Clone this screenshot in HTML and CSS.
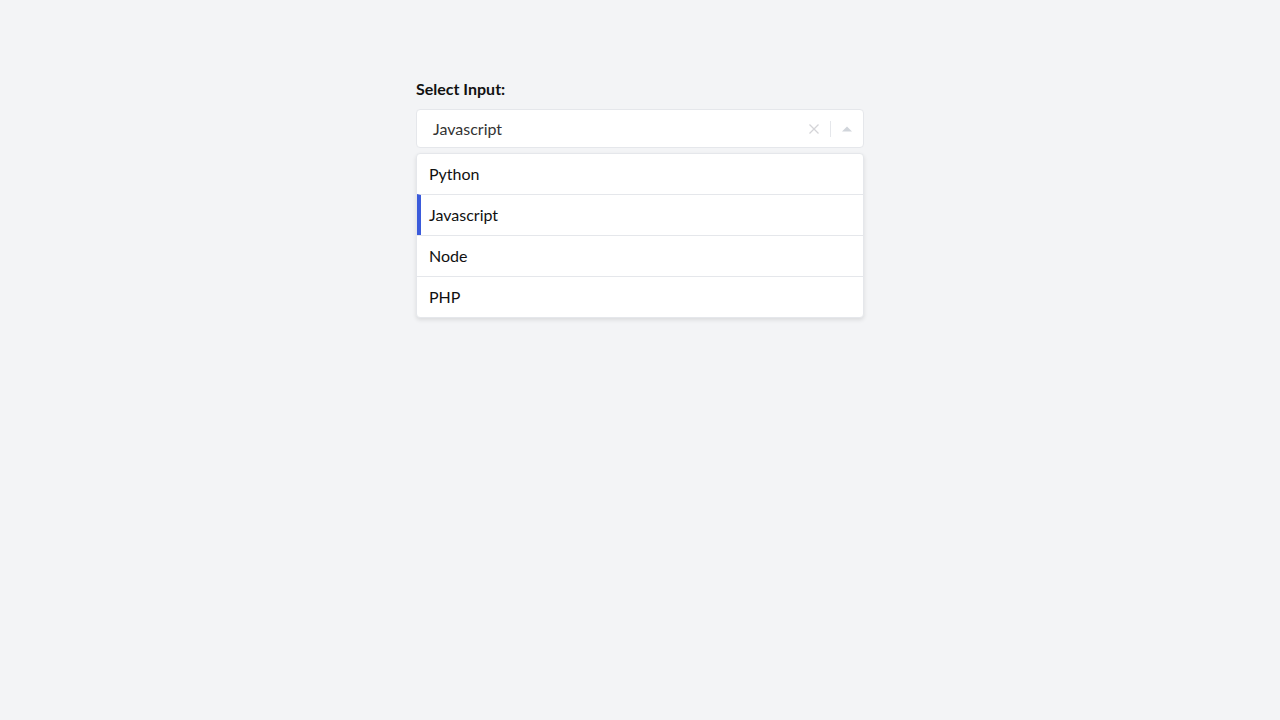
FILE: index.html
```html
<!DOCTYPE html>
<html>
<head>
<meta charset="utf-8">
<link rel="stylesheet" href="styles.css">
</head>
<body>
<div class="wrap">
  <label class="label">Select Input:</label>
  <div class="select">
    <span class="value">Javascript</span>
    <div class="controls">
      <svg class="clear" width="12" height="12" viewBox="0 0 12 12"><path d="M1.5 1.5 L10.5 10.5 M10.5 1.5 L1.5 10.5" stroke="#d4d4d8" stroke-width="1.3" fill="none"/></svg>
      <span class="sep"></span>
      <svg class="caret" width="12" height="8" viewBox="0 0 12 8"><path d="M1 6.5 L6 1.5 L11 6.5 Z" fill="#d1d5db"/></svg>
    </div>
  </div>
  <ul class="menu">
    <li class="opt">Python</li>
    <li class="opt active">Javascript</li>
    <li class="opt">Node</li>
    <li class="opt">PHP</li>
  </ul>
</div>
</body>
</html>
```
FILE: styles.css
```css
html, body { margin: 0; padding: 0; }
body {
  background: #f3f4f6;
  font-family: Lato, "Noto Sans", sans-serif;
  color: #111827;
  height: 720px;
}
.wrap {
  width: 448px;
  margin: 0 auto;
  padding-top: 78px;
}
.label {
  display: block;
  font-weight: 700;
  font-size: 16px;
  line-height: 22px;
  margin-bottom: 9px;
  color: #111;
}
.select {
  height: 39px;
  box-sizing: border-box;
  border: 1px solid #e5e7eb;
  border-radius: 4px;
  background: #fff;
  display: flex;
  align-items: center;
  padding-left: 16px;
}
.value {
  flex: 1;
  font-size: 16px;
  color: #333;
}
.controls {
  display: flex;
  align-items: center;
  height: 100%;
}
.clear { margin-right: 10px; }
.sep {
  width: 1px;
  height: 16px;
  background: #e5e7eb;
}
.caret { margin: 0 10px 0 10px; }
.menu {
  list-style: none;
  margin: 5px 0 0 0;
  padding: 0;
  background: #fff;
  border: 1px solid #e5e7eb;
  border-radius: 4px;
  box-shadow: 0 2px 4px rgba(0,0,0,0.10);
  overflow: hidden;
}
.opt {
  height: 40px;
  line-height: 40px;
  padding-left: 12px;
  font-size: 16px;
  color: #111;
  border-top: 1px solid #e5e7eb;
}
.opt:first-child { border-top: none; }
.opt.active {
  border-left: 4px solid #3b5bdb;
  padding-left: 8px;
}
```
